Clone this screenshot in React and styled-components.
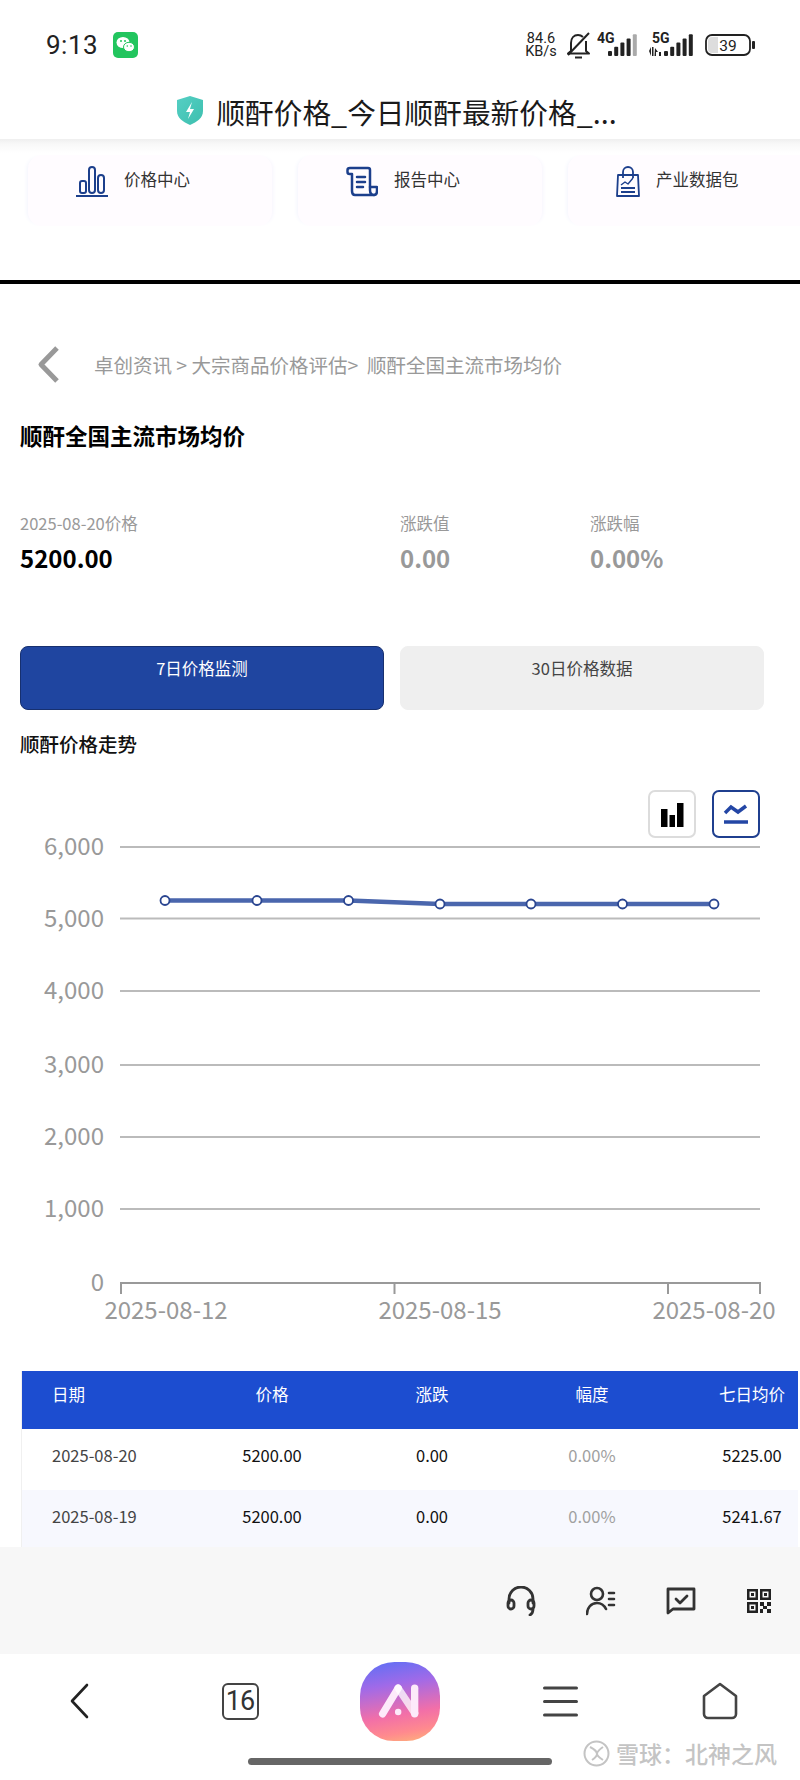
import React from 'react';
import styled, { createGlobalStyle } from 'styled-components';

const GlobalStyle = createGlobalStyle`
  html, body {
    margin: 0;
    padding: 0;
    background: #fff;
  }
  body {
    font-family: "Noto Sans CJK SC", "Noto Sans", sans-serif;
    color: #000;
  }
  * { box-sizing: border-box; }
`;

const Screen = styled.div`
  width: 800px;
  height: 1780px;
  display: flex;
  flex-direction: column;
  overflow: hidden;
  background: #fff;
`;

/* top of the phone: status bar + page title */
const StatusBar = styled.div`
  height: 90px;
  padding: 31px 45px 0 46px;
  display: flex;
  align-items: flex-start;
  justify-content: space-between;
`;
const StatusLeft = styled.div`
  display: flex;
  align-items: center;
  gap: 15px;
  height: 28px;
`;
const Clock = styled.span`
  font-family: "Roboto", sans-serif;
  font-size: 26px;
  line-height: 28px;
  color: #222;
  letter-spacing: 0.5px;
`;
const StatusRight = styled.div`
  display: flex;
  align-items: center;
  height: 28px;
`;
const Speed = styled.div`
  width: 34px;
  margin-right: 7px;
  display: flex;
  flex-direction: column;
  align-items: center;
  font-family: "Roboto", sans-serif;
  font-size: 14.5px;
  line-height: 13px;
  color: #222;
`;
const TitleBar = styled.div`
  height: 49px;
  padding: 0 6px 6px 0;
  display: flex;
  align-items: center;
  justify-content: center;
  gap: 13px;
  font-size: 28.7px;
  color: #1a1a1a;
  white-space: nowrap;
`;

/* shortcut cards under the title */
const CardStrip = styled.div`
  height: 141px;
  padding: 16px 0 0 28px;
  display: flex;
  gap: 26px;
  overflow: hidden;
  background: linear-gradient(to bottom, #efefef 0, #f8f8f8 5px, #fff 14px);
`;
const Card = styled.div`
  flex: none;
  width: 244px;
  height: 71px;
  padding: 11px 0 0 48px;
  display: flex;
  align-items: flex-start;
  gap: 16px;
  background: #fffcff;
  border-radius: 14px;
  box-shadow: -4px 0 4px -3px #f3f4fd, 4px 0 4px -3px #f6f4fd;
`;
const CardLabel = styled.span`
  font-size: 16.5px;
  line-height: 26px;
  color: #333;
`;
const BlackRule = styled.div`
  height: 4px;
  background: #000;
  flex: none;
`;

const Main = styled.div`
  flex: 1;
  min-height: 0;
  overflow: hidden;
`;
const Section = styled.div`
  padding: 0 36px 0 20px;
`;
const BreadcrumbRow = styled.div`
  margin-top: 62px;
  height: 37px;
  padding-left: 17px;
  display: flex;
  align-items: center;
  gap: 34px;
`;
const Breadcrumb = styled.span`
  font-size: 19.5px;
  color: #999;
  white-space: pre;
`;
const PageTitle = styled.h1`
  margin: 37px 0 0;
  font-size: 22.5px;
  line-height: 30px;
  font-weight: 700;
  color: #000;
`;
const Stats = styled.div`
  margin-top: 61px;
  display: grid;
  grid-template-columns: 380px 190px auto;
`;
const StatLabel = styled.div`
  font-size: 16.5px;
  line-height: 24px;
  color: #999;
`;
const StatValue = styled.div`
  margin-top: 7px;
  font-size: 24px;
  line-height: 32px;
  font-weight: 700;
  color: ${p => (p.$muted ? '#999' : '#000')};
`;
const Tabs = styled.div`
  margin-top: 72px;
  display: grid;
  grid-template-columns: 364px 364px;
  gap: 16px;
`;
const Tab = styled.div`
  height: 64px;
  border-radius: 8px;
  text-align: center;
  font-size: 16.5px;
  line-height: 43px;
  color: ${p => (p.$active ? '#fff' : '#444')};
  background: ${p => (p.$active ? '#1f45a0' : '#efefef')};
  border: 1px solid ${p => (p.$active ? '#17306f' : '#efefef')};
`;
const SubTitle = styled.h2`
  margin: 19px 0 0;
  font-size: 19.5px;
  line-height: 30px;
  font-weight: 500;
  color: #111;
`;
const ChartTools = styled.div`
  margin: 31px 4px 0 0;
  display: flex;
  justify-content: flex-end;
  gap: 16px;
`;
const ToolButton = styled.div`
  width: 48px;
  height: 48px;
  display: flex;
  align-items: center;
  justify-content: center;
  border-radius: 7px;
  border: 2px solid ${p => (p.$active ? '#1f3f8f' : '#dcdcdc')};
  background: #fff;
`;
const ChartSvg = styled.svg`
  display: block;
  width: 800px;
  height: 500px;
  text {
    font-family: "Noto Sans CJK SC", sans-serif;
    font-size: 24px;
    fill: #999;
  }
`;

/* price table, runs off the right edge */
const Table = styled.div`
  margin: 33px 0 0 21px;
  width: 777px;
  overflow: hidden;
  border-left: 1px solid #f0f0f0;
`;
const TableRow = styled.div`
  display: grid;
  grid-template-columns: 170px repeat(4, 160px);
  height: ${p => (p.$head ? '58px' : '61px')};
  line-height: ${p => (p.$head ? '47px' : '52px')};
  font-size: 16.5px;
  background: ${p => (p.$head ? '#1c4dd0' : p.$alt ? '#f7f8fe' : '#fff')};
  color: ${p => (p.$head ? '#fff' : '#111')};
`;
const Cell = styled.div`
  text-align: center;
  color: ${p => (p.$muted ? '#a0a0a0' : 'inherit')};
`;
const DateCell = styled.div`
  padding-left: 30px;
  color: ${p => (p.$head ? '#fff' : '#444')};
`;

/* browser bars */
const ActionBar = styled.div`
  flex: none;
  height: 107px;
  padding-right: 28px;
  display: flex;
  align-items: center;
  justify-content: flex-end;
  gap: 50px;
  background: #f7f7f7;
`;
const NavBar = styled.div`
  position: relative;
  flex: none;
  height: 126px;
  background: #fff;
`;
const NavGrid = styled.div`
  height: 94px;
  display: grid;
  grid-template-columns: repeat(5, 160px);
  align-items: center;
  justify-items: center;
`;
const TabCount = styled.div`
  width: 37px;
  height: 37px;
  display: flex;
  align-items: center;
  justify-content: center;
  border: 2px solid #444;
  border-radius: 6px;
  font-family: "Roboto", sans-serif;
  font-size: 27px;
  letter-spacing: -1px;
  color: #333;
`;
const AppIcon = styled.div`
  width: 80px;
  height: 79px;
  display: flex;
  align-items: center;
  justify-content: center;
  border-radius: 43% 43% 42% 42%;
  background: linear-gradient(170deg, #5a70f6 0%, #a06ae8 30%, #f26fa8 64%, #ff8a8e 84%, #fdb778 100%);
`;
const HomeIndicator = styled.div`
  width: 304px;
  height: 7px;
  margin: 10px auto 0;
  border-radius: 4px;
  background: #666;
`;
const Watermark = styled.div`
  position: absolute;
  left: 583px;
  top: 85px;
  display: flex;
  align-items: center;
  gap: 6px;
  font-size: 23px;
  line-height: 28px;
  font-weight: 500;
  color: #c4c4c4;
  white-space: nowrap;
  text-shadow: 0 0 1px #fff;
`;

const BLUE = '#1c3f8c';

const WeChatIcon = () => (
  <svg width="25" height="26" viewBox="0 0 25 26">
    <rect width="25" height="26" rx="5" fill="#22c55e" />
    <ellipse cx="10" cy="10.5" rx="6.5" ry="5.5" fill="#fff" />
    <ellipse cx="16" cy="15" rx="5.5" ry="4.7" fill="#fff" stroke="#22c55e" strokeWidth="1" />
    <circle cx="8" cy="9" r="1" fill="#22c55e" />
    <circle cx="12" cy="9" r="1" fill="#22c55e" />
    <circle cx="14.3" cy="14" r=".8" fill="#22c55e" />
    <circle cx="18" cy="14" r=".8" fill="#22c55e" />
  </svg>
);

const BellOffIcon = () => (
  <svg width="27" height="28" viewBox="0 0 27 28" fill="none" stroke="#222" strokeWidth="2" style={{ marginRight: 5 }}>
    <path d="M6 20V12c0-5 3-8 7-8 2 0 3.500.6 5 2M21 10v10l3 2.500H3L6 20" strokeLinejoin="round" />
    <path d="M3 24L24 2" />
    <path d="M10 26.500h7" />
  </svg>
);

const SignalIcon = ({ label, dual }) => {
  const width = dual ? 46 : 42;
  const barsX = dual ? 15 : 11;
  return (
    <svg width={width} height="28" viewBox={`0 0 ${width} 28`} style={{ marginRight: 10 }}>
      <text x={dual ? 3 : 0} y="12" fontFamily="Roboto, sans-serif" fontWeight="700" fontSize="14" fill="#222">{label}</text>
      {dual && <path d="M0 20l2-4v9zM3 16h1.500v9H3zM6 17l3 4H7v4H5.500zM10 21h2v4h-2z" fill="#222" />}
      {[0, 1, 2, 3, 4].map(i => {
        const h = 5 + i * 4.2;
        return <rect key={i} x={barsX + i * 6.2} y={25 - h} width="4" height={h} rx="1" fill={!dual && i === 4 ? '#aaa' : '#222'} />;
      })}
    </svg>
  );
};

const BatteryIcon = () => (
  <svg width="50" height="22" viewBox="0 0 50 22">
    <rect x="1" y="1" width="44" height="20" rx="6" fill="#fff" stroke="#222" strokeWidth="1.800" />
    <path d="M3 7a4 4 0 014-4h6v16H7a4 4 0 01-4-4z" fill="#ddd" />
    <rect x="47" y="7" width="3" height="8" rx="1" fill="#222" />
    <text x="23" y="16.500" textAnchor="middle" fontFamily="Roboto, sans-serif" fontSize="15.5" fill="#222">39</text>
  </svg>
);

const ShieldIcon = () => (
  <svg width="26" height="29" viewBox="0 0 26 29" style={{ marginTop: -2 }}>
    <defs>
      <linearGradient id="shieldFill" x1="0" y1="0" x2="1" y2="1">
        <stop offset="0" stopColor="#55cfc4" />
        <stop offset="1" stopColor="#3dbfae" />
      </linearGradient>
    </defs>
    <path d="M13 0l13 4v11c0 7-6 11-13 14C6 26 0 22 0 15V4z" fill="url(#shieldFill)" />
    <path d="M15 6l-6 10h4l-2 7 6-10h-4z" fill="#fff" />
  </svg>
);

const BarsIcon = () => (
  <svg width="32" height="31" viewBox="0 0 32 31" fill="none" stroke={BLUE} strokeWidth="2">
    <rect x="4" y="15" width="6" height="12" rx="2" />
    <rect x="13" y="1" width="6" height="26" rx="3" />
    <rect x="22" y="9" width="6" height="18" rx="3" />
    <path d="M0 30h32" />
  </svg>
);

const ScrollIcon = () => (
  <svg width="32" height="31" viewBox="0 0 32 31" fill="none" stroke={BLUE} strokeWidth="2.500" strokeLinejoin="round" strokeLinecap="round">
    <path d="M4 2h18c1.500 0 2 1 2 2v20c0 3 1.500 5 4 5H9c-2 0-3-2-3-4V8H3.500C2 8 1.500 7 1.500 6V4C1.500 3 2.500 2 4 2z" />
    <path d="M24 21h7v4c0 2-1 4-3 4" />
    <path d="M11 11h8M11 16h8M11 21h6" />
  </svg>
);

const BagIcon = () => (
  <svg width="24" height="31" viewBox="0 0 24 31" fill="none" stroke={BLUE} strokeWidth="1.800" strokeLinejoin="round">
    <path d="M2 9h20l1 21H1z" />
    <path d="M7 12V6a5 5 0 0110 0v6" />
    <path d="M5 19l4-3 3 2 5-6" strokeWidth="1.400" />
    <path d="M5 22h14M5 26h14" />
  </svg>
);

const BackChevron = () => (
  <svg width="23" height="37" viewBox="0 0 23 37" fill="none" stroke="#999" strokeWidth="5" strokeLinejoin="round">
    <path d="M20 2L4 18.500 20 35" />
  </svg>
);

const ColumnsToolIcon = () => (
  <svg width="24" height="25" viewBox="0 0 24 25" fill="#000">
    <rect x="1" y="7" width="6.500" height="18" />
    <rect x="9.500" y="13" width="5.500" height="12" />
    <rect x="17" y="1" width="6.500" height="24" />
  </svg>
);

const LineToolIcon = () => (
  <svg width="26" height="24" viewBox="0 0 26 24" fill="none" stroke="#2346a5" strokeWidth="3.500">
    <path d="M2 11l6-6 7 5 8-6" />
    <path d="M1 20h24" />
  </svg>
);

const HeadsetIcon = () => (
  <svg width="30" height="30" viewBox="0 0 30 30" fill="none" stroke="#333" strokeWidth="2.800" strokeLinecap="round">
    <path d="M3 17v-4a12 12 0 0124 0v4" />
    <rect x="2" y="14" width="6" height="9" rx="3" />
    <rect x="22" y="14" width="6" height="9" rx="3" />
    <path d="M27 23c0 3-1 5-3 6" />
  </svg>
);

const PersonListIcon = () => (
  <svg width="30" height="30" viewBox="0 0 30 30" fill="none" stroke="#333" strokeWidth="2.600" strokeLinecap="round">
    <circle cx="11" cy="8" r="6" />
    <path d="M1 28c0-6 4-11 10-11 4 0 7 2 9 6" />
    <path d="M23 7h5M23 13h5M23 19h5" />
  </svg>
);

const ChatCheckIcon = () => (
  <svg width="30" height="28" viewBox="0 0 30 28" fill="none" stroke="#333" strokeWidth="2.800" strokeLinejoin="round">
    <path d="M2 2h26v20H7l-5 4z" />
    <path d="M10 12l4 4 7-7" strokeLinecap="round" />
  </svg>
);

const QrIcon = () => (
  <svg width="26" height="26" viewBox="0 0 26 26" fill="#222">
    <path fillRule="evenodd" d="M1 1h11v11H1zM3.500 3.500v6h6v-6zM14 1h11v11H14zM16.500 3.500v6h6v-6zM1 14h11v11H1zM3.500 16.500v6h6v-6z" />
    <path d="M5 5h3v3H5zM18 5h3v3h-3zM5 18h3v3H5zM14 14h4v4h-4zM21 14h4v4h-4zM17 18h4v3h-4zM14 21h3v4h-3zM21 21h4v4h-4z" />
  </svg>
);

const NavBackIcon = () => (
  <svg width="20" height="36" viewBox="0 0 20 36" fill="none" stroke="#222" strokeWidth="2.600" strokeLinecap="round" strokeLinejoin="round" style={{ marginLeft: -3 }}>
    <path d="M18 2L3 18l15 16" />
  </svg>
);

const MenuIcon = () => (
  <svg width="35" height="31" viewBox="0 0 35 31" fill="none" stroke="#444" strokeWidth="3" strokeLinecap="round">
    <path d="M1.500 2h32M1.500 15.500h32M1.500 29h32" />
  </svg>
);

const HomeIcon = () => (
  <svg width="36" height="38" viewBox="0 0 36 38" fill="none" stroke="#444" strokeWidth="2.600" strokeLinejoin="round">
    <path d="M2 14L18 2l16 12v18a4 4 0 01-4 4H6a4 4 0 01-4-4z" />
  </svg>
);

const AppMark = () => (
  <svg width="44" height="38" viewBox="0 0 48 40" fill="none" strokeLinecap="round">
    <path d="M5 34L22 6" stroke="#fdeafa" strokeWidth="8" />
    <path d="M22 6L40 33" stroke="#fff" strokeOpacity=".75" strokeWidth="8" />
    <path d="M40 34V6" stroke="#fdeafa" strokeWidth="8" />
    <circle cx="22" cy="32" r="3.500" fill="#fdeafa" />
  </svg>
);

const WatermarkLogo = () => (
  <svg width="27" height="27" viewBox="0 0 27 27" fill="none" stroke="#c4c4c4" strokeWidth="2">
    <circle cx="13.500" cy="13.500" r="12" />
    <path d="M7 7c4 2 7 5 7 7s-2 4-5 6M20 7c-3 2-6 5-6 7s3 4 6 6" />
  </svg>
);

const gridYs = [847, 918.5, 991, 1065, 1137, 1209];
const gridLabels = ['6,000', '5,000', '4,000', '3,000', '2,000', '1,000'];
const CHART_TOP = 838;
const points = [
  [165, 900.5], [257, 900.5], [348.5, 900.5], [440, 904],
  [531, 904], [622.5, 904], [714, 904],
];

const PriceChart = () => (
  <ChartSvg viewBox={`0 ${CHART_TOP} 800 500`}>
    {gridYs.map((y, i) => (
      <g key={y}>
        <line x1="120" x2="760" y1={y} y2={y} stroke="#bbb" strokeWidth="2" />
        <text x="104" y={y + 8} textAnchor="end">{gridLabels[i]}</text>
      </g>
    ))}
    <text x="104" y="1291" textAnchor="end">0</text>
    <path d="M120 1283h641M121 1283v11M394.500 1283v11M668 1283v11M760 1283v11" stroke="#999" strokeWidth="2" fill="none" />
    <text x="166" y="1319" textAnchor="middle">2025-08-12</text>
    <text x="440" y="1319" textAnchor="middle">2025-08-15</text>
    <text x="714" y="1319" textAnchor="middle">2025-08-20</text>
    <polyline points={points.map(p => p.join(',')).join(' ')} fill="none" stroke="#4a66ad" strokeWidth="4.500" />
    {points.map(([x, y]) => (
      <circle key={x} cx={x} cy={y} r="4.500" fill="#fff" stroke="#2a4590" strokeWidth="1.800" />
    ))}
  </ChartSvg>
);

const rows = [
  ['2025-08-20', '5200.00', '0.00', '0.00%', '5225.00'],
  ['2025-08-19', '5200.00', '0.00', '0.00%', '5241.67'],
];

export default function App() {
  return (
    <Screen>
      <GlobalStyle />
      <StatusBar>
        <StatusLeft>
          <Clock>9:13</Clock>
          <WeChatIcon />
        </StatusLeft>
        <StatusRight>
          <Speed><span>84.6</span><span>KB/s</span></Speed>
          <BellOffIcon />
          <SignalIcon label="4G" />
          <SignalIcon label="5G" dual />
          <BatteryIcon />
        </StatusRight>
      </StatusBar>
      <TitleBar>
        <ShieldIcon />
        <span>顺酐价格_今日顺酐最新价格_...</span>
      </TitleBar>

      <CardStrip>
        <Card><BarsIcon /><CardLabel>价格中心</CardLabel></Card>
        <Card><ScrollIcon /><CardLabel>报告中心</CardLabel></Card>
        <Card><BagIcon /><CardLabel>产业数据包</CardLabel></Card>
      </CardStrip>
      <BlackRule />

      <Main>
        <Section>
          <BreadcrumbRow>
            <BackChevron />
            <Breadcrumb>卓创资讯 &gt; 大宗商品价格评估&gt;  顺酐全国主流市场均价</Breadcrumb>
          </BreadcrumbRow>
          <PageTitle>顺酐全国主流市场均价</PageTitle>
          <Stats>
            <div>
              <StatLabel>2025-08-20价格</StatLabel>
              <StatValue>5200.00</StatValue>
            </div>
            <div>
              <StatLabel>涨跌值</StatLabel>
              <StatValue $muted>0.00</StatValue>
            </div>
            <div>
              <StatLabel>涨跌幅</StatLabel>
              <StatValue $muted>0.00%</StatValue>
            </div>
          </Stats>
          <Tabs>
            <Tab $active>7日价格监测</Tab>
            <Tab>30日价格数据</Tab>
          </Tabs>
          <SubTitle>顺酐价格走势</SubTitle>
          <ChartTools>
            <ToolButton><ColumnsToolIcon /></ToolButton>
            <ToolButton $active><LineToolIcon /></ToolButton>
          </ChartTools>
        </Section>
        <PriceChart />
        <Table>
          <TableRow $head>
            <DateCell $head>日期</DateCell>
            <Cell>价格</Cell>
            <Cell>涨跌</Cell>
            <Cell>幅度</Cell>
            <Cell>七日均价</Cell>
          </TableRow>
          {rows.map((r, i) => (
            <TableRow key={r[0]} $alt={i % 2 === 1}>
              <DateCell>{r[0]}</DateCell>
              <Cell>{r[1]}</Cell>
              <Cell>{r[2]}</Cell>
              <Cell $muted>{r[3]}</Cell>
              <Cell>{r[4]}</Cell>
            </TableRow>
          ))}
        </Table>
      </Main>

      <ActionBar>
        <HeadsetIcon />
        <PersonListIcon />
        <ChatCheckIcon />
        <QrIcon />
      </ActionBar>
      <NavBar>
        <NavGrid>
          <NavBackIcon />
          <TabCount>16</TabCount>
          <AppIcon><AppMark /></AppIcon>
          <MenuIcon />
          <HomeIcon />
        </NavGrid>
        <HomeIndicator />
        <Watermark>
          <WatermarkLogo />
          <span>雪球：北神之风</span>
        </Watermark>
      </NavBar>
    </Screen>
  );
}
